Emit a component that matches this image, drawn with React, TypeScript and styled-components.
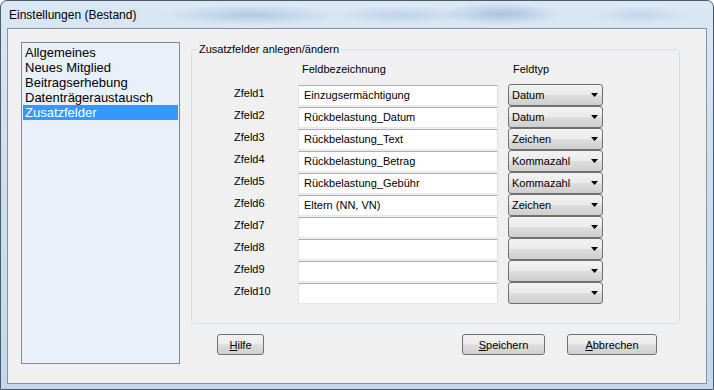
import * as React from "react"
import styled, { createGlobalStyle } from "styled-components"

const GlobalStyle = createGlobalStyle`
    html, body {
        margin: 0;
        padding: 0;
    }
    body {
        font-family: "Liberation Sans", Arial, sans-serif;
        background: #ffffff;
    }
`

const Window = styled.div`
    width: 714px;
    height: 390px;
    box-sizing: border-box;
    display: flex;
    flex-direction: column;
    padding: 0 6px 5px 6px;
    border: 1px solid #4a5b6d;
    border-radius: 7px 7px 0 0;
    overflow: hidden;
    background:
        radial-gradient(ellipse 90px 10px at 250px 14px, rgba(150, 178, 210, 0.55), transparent),
        radial-gradient(ellipse 70px 9px at 400px 14px, rgba(160, 186, 214, 0.45), transparent),
        radial-gradient(ellipse 60px 11px at 500px 13px, rgba(140, 168, 204, 0.6), transparent),
        radial-gradient(ellipse 50px 9px at 640px 14px, rgba(170, 194, 220, 0.45), transparent),
        linear-gradient(180deg, #dbe7f4 0%, #cfdff0 40%, #c4d7ec 100%);
`

const TitleBar = styled.div`
    height: 27px;
    display: flex;
    align-items: center;
    padding-left: 2px;
    font-size: 12px;
    color: #000000;
    flex-shrink: 0;
`

const Client = styled.div`
    flex: 1;
    display: flex;
    align-items: flex-start;
    padding: 13px 0 0 13px;
    border: 1px solid #8594a4;
    background: #f0f0f0;
`

const ListBox = styled.div`
    width: 159px;
    height: 322px;
    box-sizing: border-box;
    border: 1px solid #828790;
    background: #e8f0fa;
    padding: 2px 1px;
    flex-shrink: 0;
`

const ListItem = styled.div<{ $selected?: boolean }>`
    height: 15px;
    line-height: 15px;
    padding-left: 2px;
    font-size: 13px;
    color: ${p => (p.$selected ? "#ffffff" : "#000000")};
    background: ${p => (p.$selected ? "#3399ff" : "transparent")};
    white-space: nowrap;
`

const RightColumn = styled.div`
    margin-left: 11px;
    display: flex;
    flex-direction: column;
    width: 489px;
`

const GroupBox = styled.fieldset`
    margin: 1px 0 0 0;
    width: 489px;
    box-sizing: border-box;
    border: 1px solid #d5dfe5;
    border-radius: 4px;
    padding: 0 0 19px 0;
    min-inline-size: 0;
`

const Legend = styled.legend`
    margin-left: 5px;
    padding: 0 2px;
    font-size: 11px;
    line-height: 13px;
    color: #000000;
`

const FieldGrid = styled.div`
    margin-left: 42px;
    display: flex;
    flex-direction: column;
`

const HeaderRow = styled.div`
    display: flex;
    align-items: center;
    height: 22px;
    margin: 2px 0 4px 0;
    font-size: 11px;
`

const HeaderCell = styled.div<{ $width: number; $indent: number }>`
    width: ${p => p.$width}px;
    padding-left: ${p => p.$indent}px;
    box-sizing: border-box;
`

const FieldRow = styled.div`
    display: flex;
    align-items: flex-start;
    height: 22px;
`

const FieldLabel = styled.div`
    width: 64px;
    height: 20px;
    line-height: 18px;
    font-size: 11px;
    color: #000000;
`

const TextBox = styled.div`
    width: 200px;
    height: 21px;
    margin-top: 1px;
    box-sizing: border-box;
    border: 1px solid;
    border-color: #abadb3 #dbdfe6 #e3e9ef #e2e3ea;
    background: #ffffff;
    padding-left: 5px;
    font-size: 11px;
    line-height: 18px;
    color: #000000;
    white-space: nowrap;
`

const Combo = styled.div`
    width: 95px;
    height: 22px;
    margin-left: 10px;
    box-sizing: border-box;
    border: 1px solid #707070;
    border-radius: 3px;
    background: linear-gradient(180deg, #f2f2f2 0%, #ebebeb 48%, #dddddd 52%, #cfcfcf 100%);
    display: flex;
    align-items: center;
    padding: 0 4px 0 3px;
    font-size: 11px;
    color: #000000;
`

const ComboText = styled.span`
    flex: 1;
`

const ButtonRow = styled.div`
    display: flex;
    align-items: center;
    margin-top: 10px;
    padding: 0 23px 0 26px;
`

const Button = styled.div<{ $width: number; $push?: boolean; $gap?: number }>`
    width: ${p => p.$width}px;
    height: 21px;
    box-sizing: border-box;
    margin-left: ${p => (p.$push ? "auto" : `${p.$gap ?? 0}px`)};
    border: 1px solid #707070;
    border-radius: 3px;
    background: linear-gradient(180deg, #f2f2f2 0%, #ebebeb 48%, #dddddd 52%, #cfcfcf 100%);
    display: flex;
    align-items: center;
    justify-content: center;
    font-size: 11px;
    color: #000000;
`

const Mnemonic = styled.span`
    text-decoration: underline;
`

const Arrow = () => (
    <svg width="7" height="4" viewBox="0 0 7 4">
        <path d="M0 0h7L3.5 4z" fill="#000" />
    </svg>
)

const menu = ["Allgemeines", "Neues Mitglied", "Beitragserhebung", "Datenträgeraustausch", "Zusatzfelder"]

const fields: { name: string; type: string }[] = [
    { name: "Einzugsermächtigung", type: "Datum" },
    { name: "Rückbelastung_Datum", type: "Datum" },
    { name: "Rückbelastung_Text", type: "Zeichen" },
    { name: "Rückbelastung_Betrag", type: "Kommazahl" },
    { name: "Rückbelastung_Gebühr", type: "Kommazahl" },
    { name: "Eltern (NN, VN)", type: "Zeichen" },
    { name: "", type: "" },
    { name: "", type: "" },
    { name: "", type: "" },
    { name: "", type: "" },
]

export default function App() {
    return (
        <>
            <GlobalStyle />
            <Window>
                <TitleBar>Einstellungen (Bestand)</TitleBar>
                <Client>
                    <ListBox>
                        {menu.map(item => (
                            <ListItem key={item} $selected={item === "Zusatzfelder"}>
                                {item}
                            </ListItem>
                        ))}
                    </ListBox>
                    <RightColumn>
                        <GroupBox>
                            <Legend>Zusatzfelder anlegen/ändern</Legend>
                            <FieldGrid>
                                <HeaderRow>
                                    <HeaderCell $width={64} $indent={0} />
                                    <HeaderCell $width={210} $indent={4}>Feldbezeichnung</HeaderCell>
                                    <HeaderCell $width={95} $indent={5}>Feldtyp</HeaderCell>
                                </HeaderRow>
                                {fields.map((f, i) => (
                                    <FieldRow key={i}>
                                        <FieldLabel>Zfeld{i + 1}</FieldLabel>
                                        <TextBox>{f.name}</TextBox>
                                        <Combo>
                                            <ComboText>{f.type}</ComboText>
                                            <Arrow />
                                        </Combo>
                                    </FieldRow>
                                ))}
                            </FieldGrid>
                        </GroupBox>
                        <ButtonRow>
                            <Button $width={47}>
                                <Mnemonic>H</Mnemonic>ilfe
                            </Button>
                            <Button $width={83} $push>
                                <Mnemonic>S</Mnemonic>peichern
                            </Button>
                            <Button $width={90} $gap={22}>
                                <Mnemonic>A</Mnemonic>bbrechen
                            </Button>
                        </ButtonRow>
                    </RightColumn>
                </Client>
            </Window>
        </>
    )
}
